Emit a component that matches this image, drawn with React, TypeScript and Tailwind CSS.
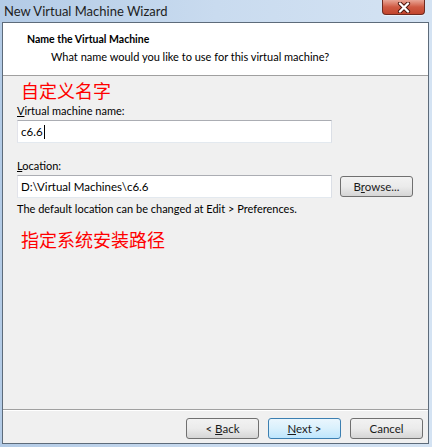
import React from "react"

const ui = "font-['Lato',_'Noto_Sans',_sans-serif]"
const cjk = "font-['Noto_Sans_CJK_SC',_sans-serif]"

function Btn({ children, primary = false, className = "" }: { children: React.ReactNode; primary?: boolean; className?: string }) {
  return (
    <button
      className={`h-[21px] w-[73px] rounded-[3px] border text-[11.5px] leading-none text-[#1a1a1a] ${
        primary
          ? "border-[#3c7fb1] bg-gradient-to-b from-[#eaf6fd] via-[#d9f0fc] to-[#bee6fd]"
          : "border-[#707070] bg-gradient-to-b from-[#f2f2f2] via-[#ebebeb] to-[#d5d5d5]"
      } ${className}`}
    >
      {children}
    </button>
  )
}

function CloseX() {
  return (
    <svg width="14" height="11" viewBox="0 0 14 11">
      <path d="M3 1.5 L11 9.5 M11 1.5 L3 9.5" stroke="#4a140c" strokeWidth="4.2" strokeLinecap="round" />
      <path d="M3 1.5 L11 9.5 M11 1.5 L3 9.5" stroke="#ffffff" strokeWidth="2.4" strokeLinecap="round" />
    </svg>
  )
}

export default function App() {
  return (
    <div className={`${ui} flex h-[447px] w-[432px] flex-col bg-gradient-to-r from-[#b3cbe6] via-[#c9dbef] to-[#d4e3f3]`}>
      {/* title bar */}
      <div className="flex h-[22px] items-start justify-between pl-[4px] pr-[7px]">
        <span className="mt-[2px] text-[13px] leading-[18px] text-[#1e1e1e]">New Virtual Machine Wizard</span>
        <div className="flex h-[15px] w-[43px] items-center justify-center rounded-b-[4px] border border-t-0 border-[#6e2a20] bg-gradient-to-b from-[#e8a596] via-[#cf5a43] to-[#c2452d] shadow-[0_1px_1px_rgba(255,255,255,0.6)]">
          <CloseX />
        </div>
      </div>

      {/* client area */}
      <div className="mb-[3px] ml-[2px] mr-[3px] flex flex-1 flex-col border border-[#5d6b7a] bg-[#f0f0f0]">
        <div className="h-[53px] border-b border-[#a0a0a0] bg-white pl-[24px] pt-[9px] text-[11px] leading-[15px] text-black">
          <div className="text-[10.5px] font-bold">Name the Virtual Machine</div>
          <div className="pl-[24px] pt-[2px]">What name would you like to use for this virtual machine?</div>
        </div>

        <div className="flex-1 px-[14px] text-[11px] leading-[15px] text-black">
          <div className={`${cjk} ml-[4px] mt-[3px] text-[18px] leading-[22px] text-[#ff0000]`}>自定义名字</div>
          <div className="mt-[2px]">
            <span className="underline">V</span>irtual machine name:
          </div>
          <div className="mt-[2px] flex h-[23px] w-[315px] items-center border border-[#abadb3] border-b-[#e3e9ef] border-l-[#e2e3ea] border-r-[#dbdfe6] bg-white pl-[3px] text-[11.5px]">
            c6.6<span className="ml-[1px] inline-block h-[14px] w-px bg-black" />
          </div>
          <div className="mt-[15px]">
            <span className="underline">L</span>ocation:
          </div>
          <div className="mt-[2px] flex items-center gap-[8px]">
            <div className="flex h-[23px] w-[315px] items-center border border-[#abadb3] border-b-[#e3e9ef] border-l-[#e2e3ea] border-r-[#dbdfe6] bg-white pl-[3px] text-[11.5px]">
              D:\Virtual Machines\c6.6
            </div>
            <Btn>
              B<span className="underline">r</span>owse...
            </Btn>
          </div>
          <div className="mt-[3px]">The default location can be changed at Edit &gt; Preferences.</div>
          <div className={`${cjk} ml-[4px] mt-[12px] text-[18px] leading-[22px] text-[#ff0000]`}>指定系统安装路径</div>
        </div>

        <div className="flex h-[34px] items-start justify-end gap-[9px] border-t border-[#a0a0a0] pr-[5px] pt-[8px] shadow-[inset_0_1px_0_#ffffff]">
          <Btn>
            &lt; <span className="underline">B</span>ack
          </Btn>
          <Btn primary>
            <span className="underline">N</span>ext &gt;
          </Btn>
          <Btn>Cancel</Btn>
        </div>
      </div>
    </div>
  )
}
